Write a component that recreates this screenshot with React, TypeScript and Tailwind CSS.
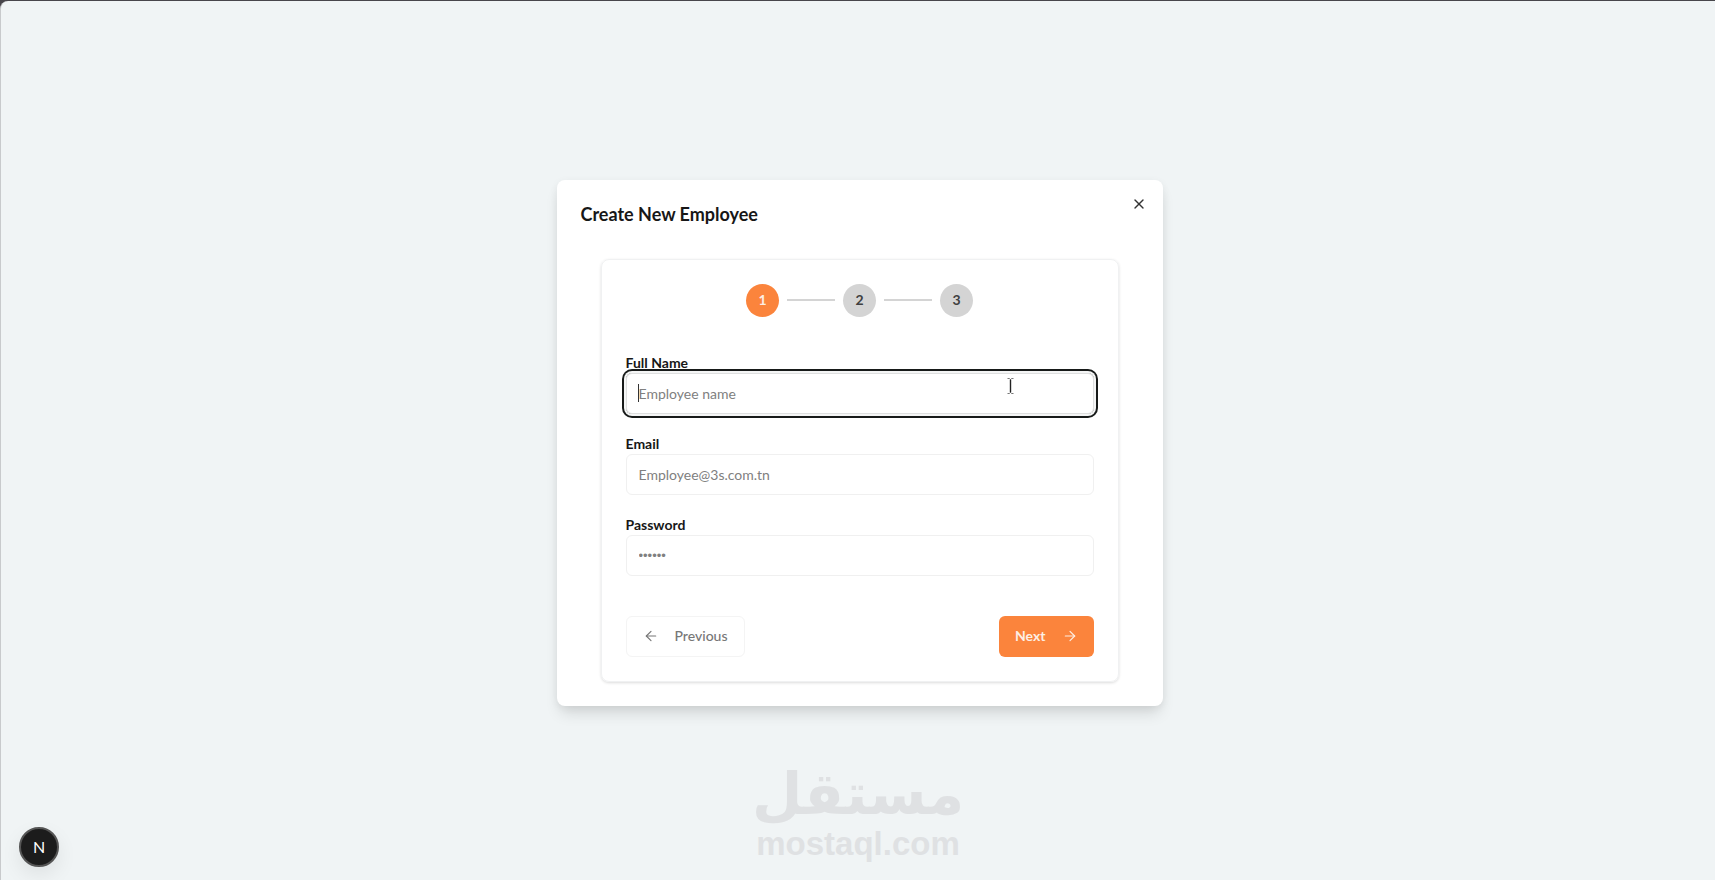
import { useState } from 'react';
import { ArrowLeft, ArrowRight, X } from 'lucide-react';

const steps = [1, 2, 3];

const fields = [
  { id: 'name', label: 'Full Name', type: 'text', placeholder: 'Employee name' },
  { id: 'email', label: 'Email', type: 'email', placeholder: 'Employee@3s.com.tn' },
  { id: 'password', label: 'Password', type: 'password', placeholder: '••••••' },
];

function Stepper({ current }: { current: number }) {
  return (
    <ol className="mb-9 flex items-center justify-center gap-2">
      {steps.map((step) => (
        <li key={step} className="flex items-center gap-2">
          {step > 1 && <span className="h-0.5 w-12 bg-[#d4d4d4]" />}
          <span
            className={`flex size-[33px] items-center justify-center rounded-full text-sm font-bold ${
              step === current ? 'bg-[#fb843c] text-[#fdeee4]' : 'bg-[#d4d4d4] text-[#404040]'
            }`}
          >
            {step}
          </span>
        </li>
      ))}
    </ol>
  );
}

function Watermark() {
  return (
    <div className="pointer-events-none absolute inset-x-0 bottom-4 flex flex-col items-center text-[#dfe1e3]">
      <span
        dir="rtl"
        lang="ar"
        className="font-['DejaVu_Sans',sans-serif] text-[58px] leading-[60px] font-bold"
      >
        مستقل
      </span>
      <span className="font-['Liberation_Sans',sans-serif] text-[33px] leading-10 font-bold">
        mostaql.com
      </span>
    </div>
  );
}

export default function App() {
  const [values, setValues] = useState<Record<string, string>>({});
  const active = 'name';

  return (
    <div className="min-h-screen bg-[#48464b] pt-px font-['Lato',sans-serif] text-[#171717]">
      <main className="relative flex min-h-[calc(100vh-1px)] items-center justify-center rounded-tl-lg border-l border-[#c8cacc] bg-[#f0f4f5] pt-1 pl-[3px]">
        <section
          role="dialog"
          aria-labelledby="dialog-title"
          className="relative z-10 w-full max-w-[606px] rounded-lg bg-white p-6 shadow-[0_10px_15px_-3px_rgba(0,0,0,0.12),0_2px_8px_rgba(0,0,0,0.06)]"
        >
          <h2 id="dialog-title" className="text-lg leading-5 font-bold">
            Create New Employee
          </h2>
          <button type="button" aria-label="Close" className="absolute top-4 right-4 text-[#333]">
            <X size={16} />
          </button>

          <form className="mx-5 mt-[35px] rounded-lg border border-[#f0f1f2] p-6 shadow-[0_1px_3px_rgba(0,0,0,0.14)]">
            <Stepper current={1} />

            <div className="flex flex-col gap-5">
              {fields.map((field) => (
                <div key={field.id} className="relative">
                  <label htmlFor={field.id} className="block text-sm leading-5 font-bold">
                    {field.label}
                  </label>
                  <input
                    id={field.id}
                    type={field.type}
                    placeholder={field.placeholder}
                    value={values[field.id] ?? ''}
                    onChange={(e) => setValues({ ...values, [field.id]: e.target.value })}
                    className={`block h-[41px] w-full rounded-md border px-3 outline-none placeholder:text-[#808080] ${
                      field.id === active
                        ? 'border-[#dedfdf] ring-2 ring-[#171a19] ring-offset-2 ring-offset-[#f4f5f5]'
                        : 'border-[#f0f0f0]'
                    } ${field.type === 'password' ? "font-['Liberation_Sans',sans-serif] text-[13px]" : 'text-sm'}`}
                  />
                  {field.id === active && (
                    <>
                      <span className="absolute bottom-3 left-3 h-[18px] w-px bg-[#333]" />
                      <svg
                        width="7"
                        height="16"
                        viewBox="0 0 7 16"
                        fill="none"
                        stroke="#222"
                        className="absolute right-20 bottom-5"
                      >
                        <path d="M0.5 0.5H2.5L3.5 1.5L4.5 0.5H6.5M0.5 15.5H2.5L3.5 14.5L4.5 15.5H6.5" stroke="#777" />
                        <path d="M3.5 1.5V14.5" strokeWidth="1.4" />
                      </svg>
                    </>
                  )}
                </div>
              ))}
            </div>

            <div className="mt-10 flex justify-between">
              <button
                type="button"
                className="flex h-[41px] items-center gap-4 rounded-md border border-[#f4f4f4] px-4 text-sm font-medium text-[#777]"
              >
                <ArrowLeft size={16} strokeWidth={1.75} />
                Previous
              </button>
              <button
                type="button"
                className="flex h-[41px] items-center gap-4 rounded-md bg-[#fb843c] px-4 text-sm font-bold text-[#fdeee4]"
              >
                Next
                <ArrowRight size={16} strokeWidth={1.75} />
              </button>
            </div>
          </form>
        </section>

        <Watermark />

        <button
          type="button"
          aria-label="Open menu"
          className="absolute bottom-[13px] left-[18px] flex size-10 items-center justify-center rounded-full border-2 border-[#555] bg-[#1c1c1c] text-base text-white shadow-[0_8px_20px_rgba(0,0,0,0.08)]"
        >
          N
        </button>
      </main>
    </div>
  );
}
